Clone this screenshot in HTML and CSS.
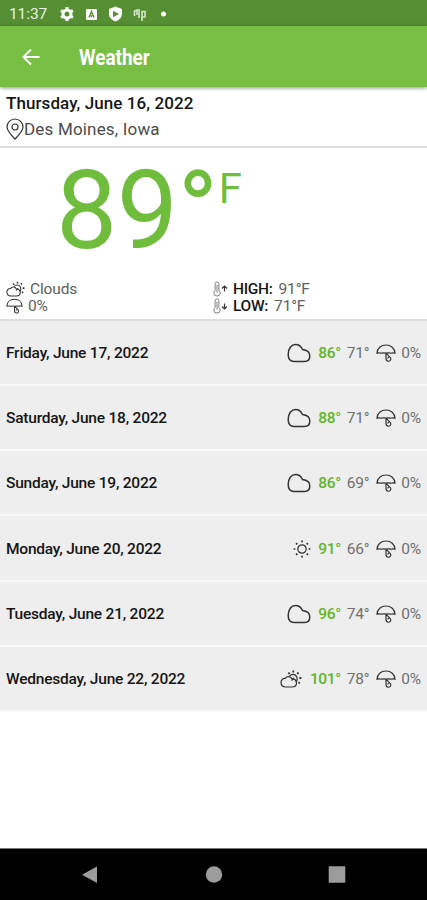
FILE: index.html
```html
<!DOCTYPE html>
<html lang="en">
<head>
<meta charset="utf-8">
<title>Weather</title>
<link rel="stylesheet" href="styles.css">
</head>
<body>
<svg class="defs" aria-hidden="true">
  <symbol id="cloud" viewBox="0 0 24 20"><path d="M7 18.500C3 18.500 1.200 15.500 1.200 11.500C1.200 5.500 4.300 1.500 8.600 1.500C12 1.500 14 3.200 15.500 6.500C20 7 22.800 9 22.800 13C22.800 16.500 20.500 18.500 17.500 18.500Z"/></symbol>
  <symbol id="umbrella" viewBox="0 0 20 18"><path d="M1 9.200C1.300 4.200 5 1 10 1S18.700 4.200 19 9.200Q16.500 8.600 14.500 9.200Q12.200 8.600 10 9.200Q7.800 8.600 5.500 9.200Q3.500 8.600 1 9.200ZM10 9.200L13.600 12.800M10 9.200V14.200C10 18.200 14.800 18.200 14.800 14.700C14.800 12.600 12 12.400 11.800 14.500"/></symbol>
  <symbol id="partly" viewBox="0 0 22 18"><path d="M5.500 17C2.600 17 1 15.200 1 12.600S2.800 8.200 5.300 8.400C6.500 6 10.500 5.800 12 8.900C14.400 8.800 16.500 10 16.500 13S14.200 17 12 17Z"/><path d="M9.500 6.200C11 3.600 15.500 3.600 16.800 7C17.500 9.500 17 11.200 15.900 12M14 8L11.500 10.500"/><path stroke-width="1.800" d="M13.300 .5V2.500M8.400 2.500L9.500 4M18.500 2.500L17.200 3.800M19.400 8H21.400M18.500 12.200L19.900 13.400"/></symbol>
  <symbol id="sun" viewBox="0 0 18 18"><circle cx="9" cy="9" r="4.200"/><path stroke-width="1.700" d="M9 .6V2.300M9 15.700V17.400M.6 9H2.300M15.700 9H17.400M3.100 3.100L4.300 4.300M13.700 13.700L14.900 14.900M3.100 14.900L4.300 13.700M13.700 4.300L14.900 3.100"/></symbol>
  <symbol id="thermo" viewBox="0 0 8 17"><path d="M2 10V3Q2 1 4 1T6 3V10Q7.400 11.200 7.400 13Q7.400 16 4 16T.6 13Q.6 11.200 2 10ZM4 4V12.500"/></symbol>
</svg>
<div class="screen">
  <div class="status">
    <span class="clock">11:37</span>
    <svg class="notices" viewBox="0 0 108 16">
      <circle cx="7" cy="8" r="4" fill="none" stroke="#fff" stroke-width="3"/>
      <path d="M7 1V3M7 13V15M1 4.500L2.800 5.500M11.200 10.500L13 11.500M1 11.500L2.800 10.500M11.200 5.500L13 4.500" stroke="#fff" stroke-width="3"/>
      <rect x="26" y="3" width="11" height="11" rx="1" fill="#fff"/>
      <path d="M29 11.500L31.500 5.500L34 11.500M31.500 9V11" fill="none" stroke="#568f33" stroke-width="1.400"/>
      <path d="M55.500 .5L62 3V8.500Q61.500 13 55.500 15.500Q49.500 13 49 8.500V3Z" fill="#fff"/>
      <path d="M53 4.800L59 8L53 11.200Z" fill="#568f33"/>
      <path d="M74.500 10V5L77 4V9M79 3V12M82 15V5.500H85V11H82" fill="none" stroke="#d2e4c7" stroke-width="1.600"/>
      <circle cx="103.500" cy="8" r="2.500" fill="#fff"/>
    </svg>
    <svg class="signals" viewBox="0 0 50 16" fill="#fff">
      <path d="M0 3.800Q8.500-2.200 17 3.800L8.500 14.500Z"/><path d="M18.500 14.500L32 1V14.500Z"/>
      <path d="M39.500 2.500H42V1H46V2.500H48.500V15H39.500Z"/>
    </svg>
  </div>
  <header class="bar">
    <svg class="back" viewBox="0 0 18 18"><path d="M17.500 9H1.500M9 1.500L1.500 9L9 16.500"/></svg>
    <h1>Weather</h1>
  </header>
  <section class="place">
    <div class="today">Thursday, June 16, 2022</div>
    <div class="city"><svg class="pin" viewBox="0 0 18 22"><path d="M9 21Q1 13 1 9A8 8 0 0 1 17 9Q17 13 9 21Z"/><circle cx="9" cy="9" r="3"/></svg><span>Des Moines, Iowa</span></div>
  </section>
  <section class="current">
    <div class="temp"><span class="degrees">89°</span><span class="unit">F</span></div>
    <div class="details">
      <div><div class="line"><svg class="ic wide"><use href="#partly"/></svg><span class="sky">Clouds</span></div>
      <div class="line"><svg class="ic rain"><use href="#umbrella"/></svg><span class="chance">0%</span></div></div>
      <div><div class="line"><svg class="th"><use href="#thermo"/></svg><svg class="arrow" viewBox="0 0 7 7"><path d="M3.500 6.500V1M1 3.500L3.500 1L6 3.500"/></svg><b class="high">HIGH:</b><span>91°F</span></div>
      <div class="line"><svg class="th"><use href="#thermo"/></svg><svg class="arrow" viewBox="0 0 7 7"><path d="M3.500 .5V6M1 3.500L3.500 6L6 3.500"/></svg><b class="low">LOW:</b><span>71°F</span></div></div>
    </div>
  </section>
  <main class="days">
    <div class="day"><span class="date">Friday, June 17, 2022</span><svg class="cloud"><use href="#cloud"/></svg><span class="hi">86°</span><span class="lo">71°</span><svg class="umb"><use href="#umbrella"/></svg><span class="pct">0%</span></div>
    <div class="day"><span class="date">Saturday, June 18, 2022</span><svg class="cloud"><use href="#cloud"/></svg><span class="hi">88°</span><span class="lo">71°</span><svg class="umb"><use href="#umbrella"/></svg><span class="pct">0%</span></div>
    <div class="day"><span class="date">Sunday, June 19, 2022</span><svg class="cloud"><use href="#cloud"/></svg><span class="hi">86°</span><span class="lo">69°</span><svg class="umb"><use href="#umbrella"/></svg><span class="pct">0%</span></div>
    <div class="day"><span class="date">Monday, June 20, 2022</span><svg class="sun"><use href="#sun"/></svg><span class="hi">91°</span><span class="lo">66°</span><svg class="umb"><use href="#umbrella"/></svg><span class="pct">0%</span></div>
    <div class="day"><span class="date">Tuesday, June 21, 2022</span><svg class="cloud"><use href="#cloud"/></svg><span class="hi">96°</span><span class="lo">74°</span><svg class="umb"><use href="#umbrella"/></svg><span class="pct">0%</span></div>
    <div class="day"><span class="date">Wednesday, June 22, 2022</span><svg class="part"><use href="#partly"/></svg><span class="hi">101°</span><span class="lo">78°</span><svg class="umb"><use href="#umbrella"/></svg><span class="pct">0%</span></div>
  </main>
  <nav class="nav">
    <svg viewBox="0 0 18 20"><path d="M16 1.500V18L1 9.700Z"/></svg>
    <svg viewBox="0 0 18 20"><circle cx="9" cy="9.500" r="8.200"/></svg>
    <svg viewBox="0 0 18 20"><rect x=".7" y="1.200" width="16.600" height="16.600" rx="1"/></svg>
  </nav>
</div>
</body>
</html>
```
FILE: styles.css
```css
* { box-sizing: border-box; }
body { margin: 0; font-family: Roboto, "Liberation Sans", sans-serif; background: #fff; color: #161616; }
svg { display: block; flex: none; fill: none; stroke: #333; stroke-width: 1.2; overflow: visible; }
.defs { position: absolute; width: 0; height: 0; }
.screen { width: 427px; height: 900px; display: flex; flex-direction: column; overflow: hidden; }
.status { height: 26px; background: #568f33; display: flex; align-items: center; padding: 1px 29px 0 9px; flex: none; }
.status svg { stroke: none; }
.clock { color: #e8f2e2; font-size: 15.500px; width: 51px; letter-spacing: -.1px; }
.notices { width: 108px; height: 16px; }
.signals { width: 50px; height: 16px; margin-left: auto; }
.bar { height: 61px; background: #76bf43; display: flex; align-items: center; padding: 1px 22px 0; flex: none; position: relative; box-shadow: 0 1px 4px rgba(0,0,0,.45); }
.back { width: 18px; height: 18px; stroke: #fff; stroke-width: 2; }
.bar h1 { margin: 0 0 0 39px; padding-top: 2px; color: #fff; font-size: 22px; font-weight: 700; line-height: 26px; transform: scaleX(.86); transform-origin: left; }
.place { height: 61px; padding: 6px 6px 0; border-bottom: 2px solid #dcdcdc; flex: none; }
.today { font-size: 17px; line-height: 20px; font-weight: 500; white-space: nowrap; letter-spacing: .08px; }
.city { display: flex; align-items: center; height: 26px; margin-top: 3px; font-size: 17px; letter-spacing: .18px; color: #4c4c4c; }
.pin { width: 18px; height: 22px; }
.current { height: 173px; border-bottom: 2px solid #dedede; flex: none; }
.temp { height: 132px; display: flex; align-items: flex-start; padding-left: 56px; color: #70bd3e; }
.degrees { font-size: 109px; line-height: 126px; letter-spacing: -.5px; }
.unit { font-size: 42px; line-height: 50px; margin-top: 16px; margin-left: 1px; }
.details { display: grid; grid-template-columns: 207px 1fr; padding-left: 6px; color: #606060; font-size: 15.500px; letter-spacing: -.15px; }
.line { height: 17.500px; display: flex; align-items: center; white-space: nowrap; }
.wide { width: 19px; height: 16px; margin-right: 5px; }
.rain { width: 17px; height: 16px; margin-right: 5px; }
.th { width: 8px; height: 16px; stroke: #777; stroke-width: 1; }
.arrow { width: 7px; height: 7px; margin: 0 5px 0 0; }
.line b { color: #161616; font-weight: 500; margin-right: 6px; letter-spacing: -.3px; }
.days { height: 391px; display: grid; grid-template-rows: repeat(6, 1fr); flex: none; }
.day { background: #eee; border-bottom: 2px solid #f8f8f8; display: flex; align-items: center; padding: 1px 6px 0; font-size: 15.500px; white-space: nowrap; }
.date { font-weight: 500; margin-right: auto; letter-spacing: -.22px; }
.hi { color: #60b52e; font-weight: 500; margin-right: 6px; letter-spacing: -.4px; }
.lo { color: #707070; margin-right: 7px; letter-spacing: -.2px; }
.pct { color: #707070; letter-spacing: -.2px; }
.cloud { width: 24px; height: 20px; stroke-width: 1.500; margin-right: 7px; }
.sun { width: 18px; height: 18px; margin-right: 7px; }
.part { width: 22px; height: 18px; margin-right: 8px; }
.umb { width: 20px; height: 18px; margin-right: 5px; }
.nav { margin-top: auto; height: 52px; background: #000; border-top: 1px solid #777; display: flex; align-items: center; justify-content: space-between; padding: 0 81px; flex: none; }
.nav svg { width: 18px; height: 20px; stroke: none; fill: #9c9c9c; }
```
